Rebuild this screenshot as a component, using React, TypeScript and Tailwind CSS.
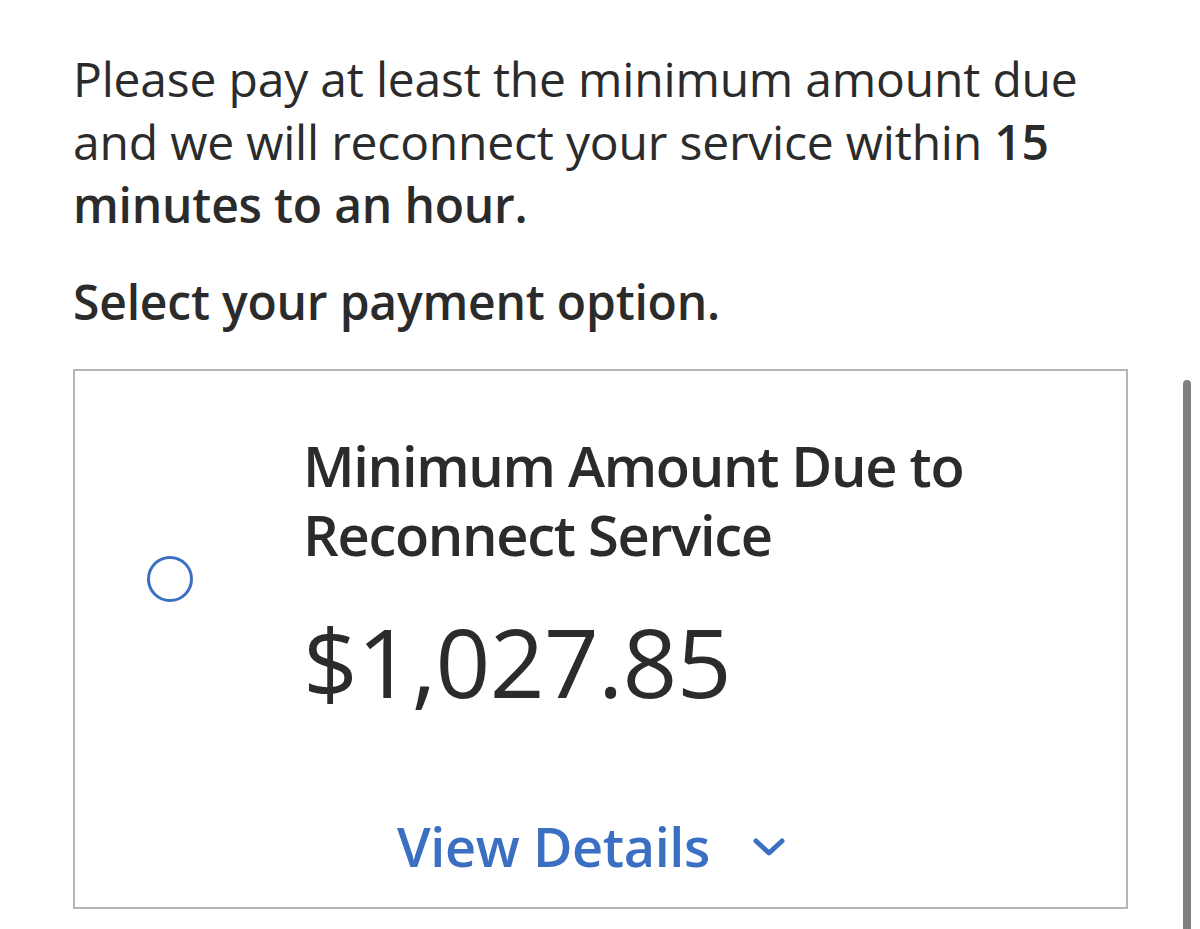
import React from "react";

export default function App() {
  return (
    <div
      className="relative w-[1200px] h-[929px] overflow-hidden bg-white text-[#2b2b2b]"
      style={{ fontFamily: '"Open Sans", "Noto Sans", sans-serif' }}
    >
      <div className="pl-[73px] pt-[47px] pr-[72px]">
        <p className="text-[48px] leading-[63px] whitespace-nowrap tracking-[-0.2px]">
          Please pay at least the minimum amount due
          <br />
          and we will reconnect your service within <span className="font-semibold">15</span>
          <br />
          <span className="font-semibold">minutes to an hour.</span>
        </p>
        <p className="mt-[34px] text-[48px] leading-[63px] font-semibold whitespace-nowrap tracking-[-0.2px]">
          Select your payment option.
        </p>
        <div className="mt-[36px] w-[1055px] h-[540px] border-2 border-[#b5b5b5] flex flex-col">
          <div className="flex items-center pt-[60px]">
            <div className="pl-[72px] pt-[18px] w-[228px] shrink-0">
              <div className="w-[46px] h-[46px] rounded-full border-[3px] border-[#3a6fc1]" />
            </div>
            <div className="flex flex-col">
              <div className="text-[56px] leading-[69px] font-semibold tracking-[-1.3px]">
                Minimum Amount Due to
                <br />
                Reconnect Service
              </div>
              <div className="mt-[44px] text-[96px] leading-[96px] tracking-[-0.7px]">$1,027.85</div>
            </div>
          </div>
          <div className="mt-auto mb-[26px] flex items-center justify-center pr-[18px] text-[#3a6fc1]">
            <span className="text-[54px] leading-[70px] font-semibold tracking-[-0.4px]">View Details</span>
            <svg
              className="ml-[42px] mt-[2px]"
              width="34"
              height="20"
              viewBox="0 0 34 20"
              fill="none"
              stroke="#3a6fc1"
              strokeWidth="5"
              strokeLinecap="round"
              strokeLinejoin="round"
            >
              <path d="M4 4 L17 16 L30 4" />
            </svg>
          </div>
        </div>
      </div>
      <div className="absolute left-[1183px] top-[380px] w-[8px] h-[560px] rounded-t-full bg-[#808080]" />
    </div>
  );
}
